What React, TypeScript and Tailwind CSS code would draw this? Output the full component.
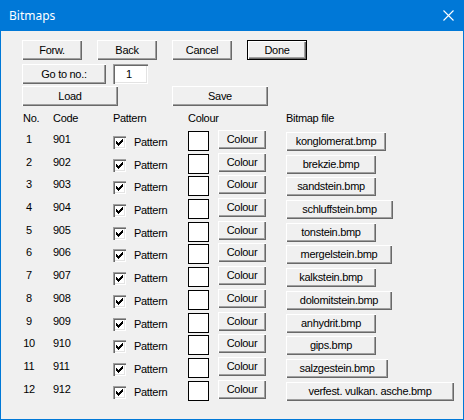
import React from "react";

const rows: [string, number][] = [
  ["konglomerat.bmp", 100],
  ["brekzie.bmp", 90],
  ["sandstein.bmp", 90],
  ["schluffstein.bmp", 107],
  ["tonstein.bmp", 90],
  ["mergelstein.bmp", 106],
  ["kalkstein.bmp", 90],
  ["dolomitstein.bmp", 106],
  ["anhydrit.bmp", 90],
  ["gips.bmp", 90],
  ["salzgestein.bmp", 102],
  ["verfest. vulkan. asche.bmp", 168],
];

const btn =
  "flex items-center justify-center bg-[#f0f0f0] shadow-[inset_1px_1px_0_#ffffff,inset_-1px_-1px_0_#696969,inset_-2px_-2px_0_#a0a0a0] text-black leading-[13px]";

function Check() {
  return (
    <div className="w-[13px] h-[13px] bg-white shadow-[inset_1px_1px_0_#a0a0a0,inset_2px_2px_0_#696969,inset_-1px_-1px_0_#ffffff,inset_-2px_-2px_0_#e3e3e3] flex items-center justify-center">
      <svg width="7" height="7" viewBox="0 0 7 7" shapeRendering="crispEdges">
        <rect x="6" y="0" width="1" height="1" fill="#000" />
        <rect x="5" y="1" width="2" height="1" fill="#000" />
        <rect x="0" y="2" width="1" height="1" fill="#000" />
        <rect x="4" y="2" width="3" height="1" fill="#000" />
        <rect x="0" y="3" width="2" height="1" fill="#000" />
        <rect x="3" y="3" width="3" height="1" fill="#000" />
        <rect x="0" y="4" width="5" height="1" fill="#000" />
        <rect x="1" y="5" width="3" height="1" fill="#000" />
        <rect x="2" y="6" width="1" height="1" fill="#000" />
      </svg>
    </div>
  );
}

export default function App() {
  return (
    <div className="w-[464px] h-[420px] flex flex-col font-['Liberation_Sans',Arial,sans-serif] text-[11px] tracking-[-0.3px] text-black select-none">
      <div className="h-[31px] bg-[#0078d7] flex items-center justify-between pl-[9px] pr-[10px] shrink-0">
        <span className="font-['Noto_Sans',sans-serif] text-[12px] tracking-normal text-white leading-none">Bitmaps</span>
        <svg width="11" height="11" viewBox="0 0 11 11">
          <path d="M0.5 0.5 L10.5 10.5 M10.5 0.5 L0.5 10.5" stroke="#ffffff" strokeWidth="1.1" />
        </svg>
      </div>
      <div className="flex-1 bg-[#f0f0f0] border-l border-r border-b border-[#0078d7] pl-[21px] pt-[9px]">
        <div className="flex gap-[15px]">
          <div className={`${btn} w-[60px] h-[20px]`}>Forw.</div>
          <div className={`${btn} w-[60px] h-[20px]`}>Back</div>
          <div className={`${btn} w-[60px] h-[20px]`}>Cancel</div>
          <div className="flex items-center justify-center w-[60px] h-[20px] bg-[#f0f0f0] border border-black shadow-[inset_1px_1px_0_#ffffff,inset_-1px_-1px_0_#696969,inset_-2px_-2px_0_#a0a0a0] leading-[13px]">
            Done
          </div>
        </div>
        <div className="flex mt-[4px] gap-[7px]">
          <div className={`${btn} w-[84px] h-[20px]`}>Go to no.:</div>
          <div className="w-[35px] h-[20px] bg-white shadow-[inset_1px_1px_0_#a0a0a0,inset_2px_2px_0_#696969,inset_-1px_-1px_0_#ffffff,inset_-2px_-2px_0_#e3e3e3] flex items-center pl-[13px] leading-[13px]">
            1
          </div>
        </div>
        <div className="flex mt-[2px] gap-[54px]">
          <div className={`${btn} w-[96px] h-[20px]`}>Load</div>
          <div className={`${btn} w-[96px] h-[20px]`}>Save</div>
        </div>
        <div className="flex mt-[6px] h-[13px] leading-[13px]">
          <div className="w-[31px] pl-[1px]">No.</div>
          <div className="w-[60px]">Code</div>
          <div className="w-[75px]">Pattern</div>
          <div className="w-[98px]">Colour</div>
          <div>Bitmap file</div>
        </div>
        <div className="mt-[5px] flex flex-col">
          {rows.map(([file, w], i) => (
            <div key={i} className="flex items-start h-[22.7px] leading-[13px]">
              <div className="w-[31px] flex">
                <span className="w-[14px] text-center mt-[3px]">{i + 1}</span>
              </div>
              <div className="w-[60px] mt-[3px]">{901 + i}</div>
              <div className="mt-[6px]">
                <Check />
              </div>
              <div className="ml-[8px] w-[54px] mt-[6px]">Pattern</div>
              <div className="w-[21px] h-[20px] mt-[1px] bg-white border border-black" />
              <div className={`${btn} ml-[9px] w-[48px] h-[19px]`}>Colour</div>
              <div className={`${btn} ml-[20px] h-[19px] mt-[2px]`} style={{ width: w }}>
                {file}
              </div>
            </div>
          ))}
        </div>
      </div>
    </div>
  );
}
